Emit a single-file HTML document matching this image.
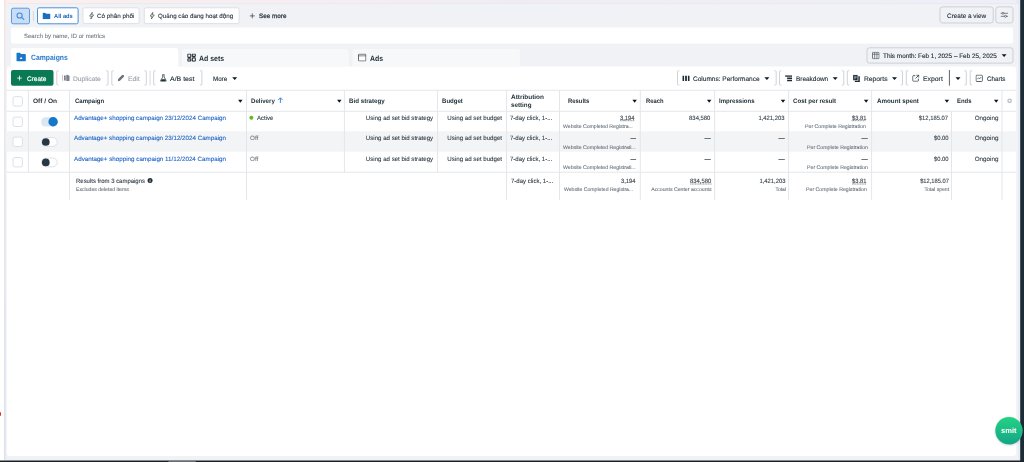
<!DOCTYPE html>
<html><head><meta charset="utf-8"><title>Campaigns</title>
<style>
html,body{margin:0;padding:0}
body{width:1024px;height:462px;overflow:hidden;position:relative;background:#fff;font-family:"Liberation Sans", "DejaVu Sans", sans-serif;}
#root{position:absolute;left:0;top:0;width:1024px;height:462px;overflow:hidden;will-change:transform}
#bg{position:absolute;left:0;top:0}
span.t{position:absolute;white-space:nowrap;line-height:10px;transform-origin:0 50%}
span.r{transform-origin:100% 50%}
</style></head><body><div id="root">
<svg id="bg" width="1024" height="462" viewBox="0 0 1024 462">
<defs><linearGradient id="gt" x1="0" x2="1" y1="0" y2="0"><stop offset="0" stop-color="#fcefee"/><stop offset="0.5" stop-color="#f1ecf4"/><stop offset="1" stop-color="#edeff8"/></linearGradient><linearGradient id="gl" x1="0" x2="0" y1="0" y2="1"><stop offset="0" stop-color="#f8e6e4"/><stop offset="0.4" stop-color="#e6e6ec"/><stop offset="1" stop-color="#d9e1ec"/></linearGradient><linearGradient id="gb" x1="0" x2="0" y1="0" y2="1"><stop offset="0" stop-color="#21d383"/><stop offset="1" stop-color="#16a487"/></linearGradient></defs>
<rect x="0.00" y="0.00" width="1024.00" height="462.00" fill="#fff"/>
<rect x="4.00" y="0.00" width="1016.00" height="6.00" fill="url(#gt)"/>
<rect x="4.00" y="0.00" width="2.00" height="460.00" fill="url(#gl)"/>
<rect x="1016.00" y="0.00" width="4.20" height="462.00" fill="#e5ebf4"/>
<path d="M5.5 461V6Q5.5 3.5 8 3.5H1016Q1018.4 3.5 1018.4 6V461Z" fill="#f0f2f6"/>
<rect x="8.00" y="3.35" width="1008.00" height="0.7" fill="#e6e7ec"/>
<rect x="1020.20" y="0.00" width="3.80" height="462.00" fill="#1d2b36"/>
<rect x="0.00" y="460.50" width="1024.00" height="1.50" fill="#1c2126"/>
<rect x="168.40" y="460.50" width="27.30" height="1.20" fill="#8b9096"/>
<ellipse cx="-0.5" cy="414" rx="1.6" ry="2.4" fill="#e1301d"/>
<rect x="11.50" y="8.20" width="18.00" height="15.60" rx="1.6" fill="#c9def6" stroke="#5a9be0" stroke-width="1"/>
<circle cx="19.6" cy="15.5" r="2.6" fill="none" stroke="#3f8bd8" stroke-width="1.05"/><path d="M21.6 17.4L23.8 19.4" stroke="#3f8bd8" stroke-width="1.2" stroke-linecap="round"/>
<rect x="32.90" y="11.00" width="1" height="10.00" fill="#d3d7dc"/>
<rect x="37.50" y="7.80" width="40.60" height="16.00" rx="1.6" fill="#fff" stroke="#4a90da" stroke-width="1"/>
<svg x="42.5" y="12.6" width="8" height="6.6" viewBox="0 0 16 13"><path d="M0 1.5Q0 0 1.5 0H5.5L7 2H14.5Q16 2 16 3.5V11.5Q16 13 14.5 13H1.5Q0 13 0 11.5Z" fill="#1b6ec2"/></svg>
<rect x="83.00" y="7.80" width="56.10" height="15.80" rx="1.8" fill="#fff" stroke="#dde0e5" stroke-width="1"/>
<svg x="88.8" y="11.9" width="5.6" height="7.5" viewBox="1.2 0.2 10 15.6"><path d="M7.5 1L2 9H6L4.5 15L10.5 6.5H6.5Z" fill="none" stroke="#3a454f" stroke-width="1.4" stroke-linejoin="round"/></svg>
<rect x="144.30" y="7.80" width="94.80" height="15.80" rx="1.8" fill="#fff" stroke="#dde0e5" stroke-width="1"/>
<svg x="149.4" y="11.9" width="5.6" height="7.5" viewBox="1.2 0.2 10 15.6"><path d="M7.5 1L2 9H6L4.5 15L10.5 6.5H6.5Z" fill="none" stroke="#3a454f" stroke-width="1.4" stroke-linejoin="round"/></svg>
<path d="M249.8 15.9h5M252.3 13.4v5" stroke="#3a454f" stroke-width="0.75"/>
<rect x="940.00" y="6.90" width="53.20" height="16.10" rx="2.5" fill="#f0f2f6" stroke="#cbd0d6" stroke-width="1"/>
<rect x="995.80" y="6.90" width="17.20" height="16.10" rx="2.5" fill="#f0f2f6" stroke="#cbd0d6" stroke-width="1"/>
<svg x="1000.5" y="11.3" width="7.5" height="7" viewBox="0 0 15 14"><path d="M0 4H15M0 10H15" stroke="#3a454f" stroke-width="1.3"/><circle cx="5" cy="4" r="2" fill="#f0f2f6" stroke="#3a454f" stroke-width="1.2"/><circle cx="10" cy="10" r="2" fill="#f0f2f6" stroke="#3a454f" stroke-width="1.2"/></svg>
<rect x="11.00" y="27.60" width="1002.00" height="16.00" rx="2" fill="#fff"/>
<path d="M6.8 453V69.5Q6.8 66.5 9.8 66.5H1013.2Q1016.2 66.5 1016.2 69.5V453Q1016.2 456 1013.2 456H9.8Q6.8 456 6.8 453Z" fill="#fff"/>
<path d="M11 70V51Q11 48 14 48H175.3Q178.3 48 178.3 51V70Z" fill="#fff"/>
<svg x="16.25" y="52.6" width="9.7" height="9" viewBox="0 0 19 18"><path d="M0 2Q0 0 2 0H6.5Q7.5 0 8 1L9 3H17Q19 3 19 5V16Q19 18 17 18H2Q0 18 0 16Z" fill="#1877c9"/><path d="M9.5 8.2L12.2 13H6.8Z" fill="#fff"/></svg>
<path d="M182 66.7V52Q182 49 185 49H345.8Q348.8 49 348.8 52V66.7Z" fill="#f7f8fa"/>
<svg x="187.2" y="53.5" width="8.7" height="8.2" viewBox="0 0 17 16"><g fill="#fff" stroke="#26313a" stroke-width="2.2"><rect x="1" y="1" width="6" height="6.5" rx="1.2"/><rect x="10" y="1" width="6" height="4.5" rx="1.2"/><rect x="1" y="10.5" width="6" height="4.5" rx="1.2"/><rect x="10" y="8.5" width="6" height="6.5" rx="1.2"/></g></svg>
<path d="M352.6 66.7V52Q352.6 49 355.6 49H517Q520 49 520 52V66.7Z" fill="#f7f8fa"/>
<svg x="358" y="53.6" width="8.4" height="8" viewBox="0 0 17 16"><rect x="1" y="1" width="15" height="14" rx="1.5" fill="#fff" stroke="#2b3640" stroke-width="1.5"/><path d="M1 4.5H16" stroke="#2b3640" stroke-width="1.2"/></svg>
<rect x="867.00" y="47.80" width="146.00" height="15.30" rx="2.5" fill="#f0f2f6" stroke="#cbd0d6" stroke-width="1"/>
<svg x="872" y="51.8" width="7.6" height="7.4" viewBox="0 0 15 15"><rect x="0.8" y="0.8" width="13.4" height="13.4" rx="1.5" fill="none" stroke="#3a454f" stroke-width="1.4"/><path d="M5.2 1V14M9.8 1V14M1 5H14" stroke="#3a454f" stroke-width="1.2"/></svg>
<path d="M1001.65 54.30h4.9l-2.45 2.8z" fill="#10171d"/>
<rect x="11.00" y="70.00" width="42.50" height="15.70" rx="2" fill="#0a7a55"/>
<path d="M17.1 78.1h4.8M19.5 75.7v4.8" stroke="#fff" stroke-width="0.8"/>
<rect x="56.30" y="70.30" width="52.20" height="15.20" rx="1.5" fill="#fff"/>
<path d="M58.70 70.80H57.40Q56.80 70.80 56.80 71.40V84.40Q56.80 85.00 57.40 85.00h1.3" fill="none" stroke="#c9cdd4" stroke-width="0.9"/>
<path d="M106.10 70.80H107.40Q108.00 70.80 108.00 71.40V84.40Q108.00 85.00 107.40 85.00h-1.3" fill="none" stroke="#c9cdd4" stroke-width="0.9"/>
<svg x="62" y="74.4" width="8" height="7" viewBox="0 0 16 14"><path d="M2.2 1Q0.8 1 0.8 2.5V11Q0.8 12.5 2.2 12.5" fill="none" stroke="#8a9199" stroke-width="1.1"/><path d="M4 2H7.5V12H4Z" fill="#7b828a"/><path d="M8.5 0.5H12L15 3.5V13H8.5Z" fill="#7b828a"/></svg>
<rect x="111.30" y="70.30" width="35.50" height="15.20" rx="1.5" fill="#fff"/>
<path d="M113.70 70.80H112.40Q111.80 70.80 111.80 71.40V84.40Q111.80 85.00 112.40 85.00h1.3" fill="none" stroke="#c9cdd4" stroke-width="0.9"/>
<path d="M144.40 70.80H145.70Q146.30 70.80 146.30 71.40V84.40Q146.30 85.00 145.70 85.00h-1.3" fill="none" stroke="#c9cdd4" stroke-width="0.9"/>
<svg x="117.5" y="74.5" width="7" height="7" viewBox="0 0 14 14"><path d="M0.6 13.4L1.4 9.2L9.4 1.2Q10.6 0 11.8 1.2L12.8 2.2Q14 3.4 12.8 4.6L4.8 12.6Z" fill="#6a7179"/></svg>
<rect x="149.60" y="70.50" width="1" height="15.00" fill="#d9dce1"/>
<rect x="153.20" y="70.30" width="49.20" height="15.20" rx="1.5" fill="#fff"/>
<path d="M155.60 70.80H154.30Q153.70 70.80 153.70 71.40V84.40Q153.70 85.00 154.30 85.00h1.3" fill="none" stroke="#c9cdd4" stroke-width="0.9"/>
<path d="M200.00 70.80H201.30Q201.90 70.80 201.90 71.40V84.40Q201.90 85.00 201.30 85.00h-1.3" fill="none" stroke="#c9cdd4" stroke-width="0.9"/>
<svg x="160" y="74.2" width="6.8" height="7.6" viewBox="0 0 14 16"><path d="M4.5 0.8H9.5M5.5 1V6L1 13.5Q0.5 15.2 2.2 15.2H11.8Q13.5 15.2 13 13.5L8.5 6V1" fill="none" stroke="#1c2b33" stroke-width="1.5"/><path d="M3.6 10.5H10.4L12.3 14.2H1.7Z" fill="#1c2b33"/></svg>
<path d="M232.20 77.20h5l-2.5 2.8z" fill="#10171d"/>
<rect x="677.00" y="70.30" width="99.70" height="15.20" rx="1.5" fill="#fff"/>
<path d="M679.40 70.80H678.10Q677.50 70.80 677.50 71.40V84.40Q677.50 85.00 678.10 85.00h1.3" fill="none" stroke="#c9cdd4" stroke-width="0.9"/>
<path d="M774.30 70.80H775.60Q776.20 70.80 776.20 71.40V84.40Q776.20 85.00 775.60 85.00h-1.3" fill="none" stroke="#c9cdd4" stroke-width="0.9"/>
<svg x="682.3" y="75.6" width="7.4" height="5.4" viewBox="0 0 15 11"><path d="M0 0H3.6V11H0ZM5.7 0H9.3V11H5.7ZM11.4 0H15V11H11.4Z" fill="#1c2b33"/></svg>
<path d="M764.40 77.20h5l-2.5 2.8z" fill="#10171d"/>
<rect x="779.00" y="70.30" width="65.30" height="15.20" rx="1.5" fill="#fff"/>
<path d="M781.40 70.80H780.10Q779.50 70.80 779.50 71.40V84.40Q779.50 85.00 780.10 85.00h1.3" fill="none" stroke="#c9cdd4" stroke-width="0.9"/>
<path d="M841.90 70.80H843.20Q843.80 70.80 843.80 71.40V84.40Q843.80 85.00 843.20 85.00h-1.3" fill="none" stroke="#c9cdd4" stroke-width="0.9"/>
<svg x="785" y="75.2" width="7.2" height="6.4" viewBox="0 0 14 13"><path d="M0 0H14V3.2H0ZM4 4.9H14V8.1H4ZM4 9.8H14V13H4Z" fill="#1c2b33"/></svg>
<path d="M832.70 77.20h5l-2.5 2.8z" fill="#10171d"/>
<rect x="846.80" y="70.30" width="56.20" height="15.20" rx="1.5" fill="#fff"/>
<path d="M849.20 70.80H847.90Q847.30 70.80 847.30 71.40V84.40Q847.30 85.00 847.90 85.00h1.3" fill="none" stroke="#c9cdd4" stroke-width="0.9"/>
<path d="M900.60 70.80H901.90Q902.50 70.80 902.50 71.40V84.40Q902.50 85.00 901.90 85.00h-1.3" fill="none" stroke="#c9cdd4" stroke-width="0.9"/>
<svg x="853" y="74.8" width="7.2" height="7.4" viewBox="0 0 14 15"><path d="M0 0H9V11H0Z" fill="#1c2b33"/><path d="M10.5 3H13.5V14.5H3.5V12.3H10.5Z" fill="#1c2b33"/><path d="M2 3H7M2 5.5H7M2 8H5" stroke="#fff" stroke-width="1"/></svg>
<path d="M892.00 77.20h5l-2.5 2.8z" fill="#10171d"/>
<rect x="905.80" y="70.30" width="61.00" height="15.20" rx="1.5" fill="#fff"/>
<path d="M908.20 70.80H906.90Q906.30 70.80 906.30 71.40V84.40Q906.30 85.00 906.90 85.00h1.3" fill="none" stroke="#c9cdd4" stroke-width="0.9"/>
<path d="M964.40 70.80H965.70Q966.30 70.80 966.30 71.40V84.40Q966.30 85.00 965.70 85.00h-1.3" fill="none" stroke="#c9cdd4" stroke-width="0.9"/>
<svg x="912.2" y="74.6" width="7.2" height="7.2" viewBox="0 0 14 14"><path d="M6 2H2.5Q1 2 1 3.5V11.5Q1 13 2.5 13H10.5Q12 13 12 11.5V8" fill="none" stroke="#1c2b33" stroke-width="1.5"/><path d="M8 1H13V6M13 1L6.5 7.5" fill="none" stroke="#1c2b33" stroke-width="1.5"/></svg>
<rect x="948.90" y="70.00" width="1.0" height="15.70" fill="#5a6773"/>
<path d="M955.50 77.20h5l-2.5 2.8z" fill="#10171d"/>
<rect x="969.70" y="70.30" width="46.50" height="15.20" rx="1.5" fill="#fff"/>
<path d="M972.10 70.80H970.80Q970.20 70.80 970.20 71.40V84.40Q970.20 85.00 970.80 85.00h1.3" fill="none" stroke="#c9cdd4" stroke-width="0.9"/>
<svg x="975.5" y="74.6" width="7.4" height="7.4" viewBox="0 0 15 15"><rect x="1" y="1" width="13" height="13" rx="2" fill="none" stroke="#1c2b33" stroke-width="1.5"/><path d="M3.5 9.5L6.5 6.5L8.5 8.5L11.5 5" fill="none" stroke="#1c2b33" stroke-width="1.3"/></svg>
<rect x="6.80" y="131.30" width="1009.40" height="20.40" fill="#f3f4f6"/>
<rect x="6.80" y="89.80" width="1009.40" height="1" fill="#e4e6ea"/>
<rect x="6.80" y="110.80" width="1009.40" height="1" fill="#e4e6ea"/>
<rect x="6.80" y="171.70" width="1009.40" height="1" fill="#e4e6ea"/>
<rect x="27.90" y="90.30" width="1" height="21.00" fill="#e4e6ea"/>
<rect x="69.00" y="90.30" width="1" height="21.00" fill="#e4e6ea"/>
<rect x="246.00" y="90.30" width="1" height="21.00" fill="#e4e6ea"/>
<rect x="343.90" y="90.30" width="1" height="21.00" fill="#e4e6ea"/>
<rect x="437.00" y="90.30" width="1" height="21.00" fill="#e4e6ea"/>
<rect x="506.00" y="90.30" width="1" height="21.00" fill="#e4e6ea"/>
<rect x="559.00" y="90.30" width="1" height="21.00" fill="#e4e6ea"/>
<rect x="639.80" y="90.30" width="1" height="21.00" fill="#e4e6ea"/>
<rect x="714.10" y="90.30" width="1" height="21.00" fill="#e4e6ea"/>
<rect x="788.10" y="90.30" width="1" height="21.00" fill="#e4e6ea"/>
<rect x="871.10" y="90.30" width="1" height="21.00" fill="#e4e6ea"/>
<rect x="1001.50" y="90.30" width="1" height="21.00" fill="#e4e6ea"/>
<rect x="27.90" y="111.30" width="1" height="60.90" fill="#e4e6ea"/>
<rect x="69.00" y="111.30" width="1" height="60.90" fill="#e4e6ea"/>
<rect x="246.00" y="111.30" width="1" height="60.90" fill="#e4e6ea"/>
<rect x="343.90" y="111.30" width="1" height="60.90" fill="#e4e6ea"/>
<rect x="437.00" y="111.30" width="1" height="60.90" fill="#e4e6ea"/>
<rect x="506.00" y="111.30" width="1" height="60.90" fill="#e4e6ea"/>
<rect x="559.00" y="111.30" width="1" height="60.90" fill="#e4e6ea"/>
<rect x="639.80" y="111.30" width="1" height="60.90" fill="#e4e6ea"/>
<rect x="714.10" y="111.30" width="1" height="60.90" fill="#e4e6ea"/>
<rect x="788.10" y="111.30" width="1" height="60.90" fill="#e4e6ea"/>
<rect x="871.10" y="111.30" width="1" height="60.90" fill="#e4e6ea"/>
<rect x="951.00" y="111.30" width="1" height="60.90" fill="#e4e6ea"/>
<rect x="1001.50" y="111.30" width="1" height="60.90" fill="#e4e6ea"/>
<rect x="69.00" y="172.20" width="1" height="27.60" fill="#e4e6ea"/>
<rect x="246.00" y="172.20" width="1" height="27.60" fill="#e4e6ea"/>
<rect x="506.00" y="172.20" width="1" height="27.60" fill="#e4e6ea"/>
<rect x="559.00" y="172.20" width="1" height="27.60" fill="#e4e6ea"/>
<rect x="639.80" y="172.20" width="1" height="27.60" fill="#e4e6ea"/>
<rect x="714.10" y="172.20" width="1" height="27.60" fill="#e4e6ea"/>
<rect x="788.10" y="172.20" width="1" height="27.60" fill="#e4e6ea"/>
<rect x="871.10" y="172.20" width="1" height="27.60" fill="#e4e6ea"/>
<rect x="951.00" y="172.20" width="1" height="27.60" fill="#e4e6ea"/>
<rect x="1001.50" y="172.20" width="1" height="27.60" fill="#e4e6ea"/>
<rect x="13.00" y="96.70" width="9.40" height="9.40" rx="1.8" fill="#fff" stroke="#dce0e5" stroke-width="1"/>
<path d="M238.05 99.85h4.5l-2.25 2.8z" fill="#10171d"/>
<path d="M280.4 102.9V97.9M278.1 100.1L280.4 97.8L282.7 100.1" fill="none" stroke="#2a7be0" stroke-width="0.9"/>
<path d="M337.05 99.85h4.5l-2.25 2.8z" fill="#10171d"/>
<path d="M632.35 99.85h4.5l-2.25 2.8z" fill="#10171d"/>
<path d="M706.95 99.85h4.5l-2.25 2.8z" fill="#10171d"/>
<path d="M780.75 99.85h4.5l-2.25 2.8z" fill="#10171d"/>
<path d="M863.85 99.85h4.5l-2.25 2.8z" fill="#10171d"/>
<path d="M944.65 99.85h4.5l-2.25 2.8z" fill="#10171d"/>
<path d="M993.95 99.85h4.5l-2.25 2.8z" fill="#10171d"/>
<circle cx="1009.6" cy="100.8" r="1.7" fill="none" stroke="#b9bec5" stroke-width="1.3"/>
<rect x="13.00" y="117.10" width="9.40" height="9.40" rx="1.8" fill="#fff" stroke="#dce0e5" stroke-width="1"/>
<rect x="41.00" y="117.30" width="16.80" height="9.20" rx="4.6" fill="#d9e6f4"/>
<circle cx="53.1" cy="121.70" r="4.7" fill="#1676c9"/>
<circle cx="251.35" cy="117.70" r="2.0" fill="#5fba24"/>
<path d="M620.00 120.70H634.60" stroke="#59636c" stroke-width="0.7" stroke-dasharray="1.1 0.5"/>
<path d="M851.60 120.70H866.00" stroke="#59636c" stroke-width="0.7" stroke-dasharray="1.1 0.5"/>
<rect x="13.00" y="137.10" width="9.40" height="9.40" rx="1.8" fill="#fff" stroke="#dce0e5" stroke-width="1"/>
<rect x="41.50" y="137.60" width="15.80" height="8.80" rx="4.9" fill="#fff" stroke="#dde1e6" stroke-width="1"/>
<circle cx="45.8" cy="142.00" r="3.85" fill="#293742"/>
<rect x="630.40" y="138.15" width="5.70" height="0.8" fill="#4a545d"/>
<rect x="704.40" y="138.15" width="6.40" height="0.8" fill="#4a545d"/>
<rect x="778.40" y="138.15" width="6.40" height="0.8" fill="#4a545d"/>
<rect x="861.40" y="138.15" width="6.40" height="0.8" fill="#4a545d"/>
<rect x="13.00" y="157.50" width="9.40" height="9.40" rx="1.8" fill="#fff" stroke="#dce0e5" stroke-width="1"/>
<rect x="41.50" y="158.00" width="15.80" height="8.80" rx="4.9" fill="#fff" stroke="#dde1e6" stroke-width="1"/>
<circle cx="45.8" cy="162.40" r="3.85" fill="#293742"/>
<rect x="630.40" y="159.05" width="5.70" height="0.8" fill="#4a545d"/>
<rect x="704.40" y="159.05" width="6.40" height="0.8" fill="#4a545d"/>
<rect x="778.40" y="159.05" width="6.40" height="0.8" fill="#4a545d"/>
<rect x="861.40" y="159.05" width="6.40" height="0.8" fill="#4a545d"/>
<circle cx="150.05" cy="180.6" r="2.5" fill="#222f39"/><path d="M150.05 180.2V182" stroke="#fff" stroke-width="0.7"/><circle cx="150.05" cy="179.3" r="0.4" fill="#fff"/>
<path d="M690.20 184.00H711.60" stroke="#59636c" stroke-width="0.7" stroke-dasharray="1.1 0.5"/>
<path d="M852.10 184.00H866.50" stroke="#59636c" stroke-width="0.7" stroke-dasharray="1.1 0.5"/>
<circle cx="1009" cy="431.6" r="15" fill="#000" opacity="0.06"/>
<circle cx="1009" cy="430.8" r="13.7" fill="url(#gb)"/>
</svg>
<span class="t" style="left:53.75px;top:11.12px;font-size:6.0px;font-weight:700;color:#1763b5;transform:matrix(0.9524,0.0005,0,1,0,0);">All ads</span>
<span class="t" style="left:97.00px;top:11.05px;font-size:6.2px;font-weight:400;color:#2a3640;transform:matrix(1.0119,0.0005,0,1,0,0);-webkit-text-stroke:0.1px #2a3640;">Có phân phối</span>
<span class="t" style="left:158.00px;top:11.05px;font-size:6.2px;font-weight:400;color:#2a3640;transform:matrix(1.0011,0.0005,0,1,0,0);-webkit-text-stroke:0.1px #2a3640;">Quảng cáo đang hoạt động</span>
<span class="t" style="left:259.00px;top:11.02px;font-size:6.3px;font-weight:400;color:#3a454f;transform:matrix(1.0069,0.0005,0,1,0,0);-webkit-text-stroke:0.3px #3a454f;">See more</span>
<span class="t" style="left:947.30px;top:10.72px;font-size:6.3px;font-weight:400;color:#1c2b33;transform:matrix(1.0182,0.0005,0,1,0,0);-webkit-text-stroke:0.1px #1c2b33;">Create a view</span>
<span class="t" style="left:23.80px;top:30.92px;font-size:6.0px;font-weight:400;color:#737c85;transform:matrix(0.9996,0.0005,0,1,0,0);-webkit-text-stroke:0.1px #737c85;">Search by name, ID or metrics</span>
<span class="t" style="left:30.60px;top:52.83px;font-size:7.7px;font-weight:700;color:#2a7bcb;transform:matrix(0.8881,0.0005,0,1,0,0);">Campaigns</span>
<span class="t" style="left:199.40px;top:53.73px;font-size:7.7px;font-weight:700;color:#1c2b33;transform:matrix(0.9035,0.0005,0,1,0,0);">Ad sets</span>
<span class="t" style="left:370.10px;top:53.73px;font-size:7.7px;font-weight:700;color:#1c2b33;transform:matrix(0.9015,0.0005,0,1,0,0);">Ads</span>
<span class="t" style="left:883.20px;top:51.05px;font-size:6.5px;font-weight:400;color:#1c2b33;transform:matrix(0.9810,0.0005,0,1,0,0);-webkit-text-stroke:0.12px #1c2b33;">This month: Feb 1, 2025 – Feb 25, 2025</span>
<span class="t" style="left:26.90px;top:73.51px;font-size:6.6px;font-weight:400;color:#fff;transform:matrix(0.9800,0.0005,0,1,0,0);-webkit-text-stroke:0.2px #fff;">Create</span>
<span class="t" style="left:73.00px;top:73.51px;font-size:6.6px;font-weight:400;color:#9aa1a9;transform:matrix(1.0109,0.0005,0,1,0,0);-webkit-text-stroke:0.1px #9aa1a9;">Duplicate</span>
<span class="t" style="left:127.70px;top:73.51px;font-size:6.6px;font-weight:400;color:#9aa1a9;transform:matrix(1.0286,0.0005,0,1,0,0);-webkit-text-stroke:0.1px #9aa1a9;">Edit</span>
<span class="t" style="left:170.20px;top:73.51px;font-size:6.6px;font-weight:400;color:#1c2b33;transform:matrix(1.0566,0.0005,0,1,0,0);-webkit-text-stroke:0.12px #1c2b33;">A/B test</span>
<span class="t" style="left:213.00px;top:73.51px;font-size:6.6px;font-weight:400;color:#1c2b33;transform:matrix(0.9514,0.0005,0,1,0,0);-webkit-text-stroke:0.12px #1c2b33;">More</span>
<span class="t" style="left:693.40px;top:73.51px;font-size:6.6px;font-weight:400;color:#1c2b33;transform:matrix(0.9876,0.0005,0,1,0,0);-webkit-text-stroke:0.12px #1c2b33;">Columns: Performance</span>
<span class="t" style="left:795.60px;top:73.51px;font-size:6.6px;font-weight:400;color:#1c2b33;transform:matrix(0.9758,0.0005,0,1,0,0);-webkit-text-stroke:0.12px #1c2b33;">Breakdown</span>
<span class="t" style="left:863.70px;top:73.51px;font-size:6.6px;font-weight:400;color:#1c2b33;transform:matrix(1.0219,0.0005,0,1,0,0);-webkit-text-stroke:0.12px #1c2b33;">Reports</span>
<span class="t" style="left:922.50px;top:73.51px;font-size:6.6px;font-weight:400;color:#1c2b33;transform:matrix(1.0387,0.0005,0,1,0,0);-webkit-text-stroke:0.12px #1c2b33;">Export</span>
<span class="t" style="left:986.70px;top:73.51px;font-size:6.6px;font-weight:400;color:#1c2b33;transform:matrix(0.9474,0.0005,0,1,0,0);-webkit-text-stroke:0.12px #1c2b33;">Charts</span>
<span class="t" style="left:33.10px;top:95.58px;font-size:6.4px;font-weight:700;color:#1c2b33;transform:matrix(1.0283,0.0005,0,1,0,0);">Off / On</span>
<span class="t" style="left:74.50px;top:95.58px;font-size:6.4px;font-weight:700;color:#1c2b33;transform:matrix(0.9448,0.0005,0,1,0,0);">Campaign</span>
<span class="t" style="left:250.80px;top:95.58px;font-size:6.4px;font-weight:700;color:#1c2b33;transform:matrix(0.9568,0.0005,0,1,0,0);">Delivery</span>
<span class="t" style="left:349.20px;top:95.98px;font-size:6.4px;font-weight:700;color:#1c2b33;transform:matrix(0.9692,0.0005,0,1,0,0);">Bid strategy</span>
<span class="t" style="left:442.00px;top:95.98px;font-size:6.4px;font-weight:700;color:#1c2b33;transform:matrix(0.9493,0.0005,0,1,0,0);">Budget</span>
<span class="t" style="left:510.90px;top:92.18px;font-size:6.4px;font-weight:700;color:#1c2b33;transform:matrix(1.0105,0.0005,0,1,0,0);">Attribution</span>
<span class="t" style="left:510.90px;top:100.28px;font-size:6.4px;font-weight:700;color:#1c2b33;transform:matrix(0.9784,0.0005,0,1,0,0);">setting</span>
<span class="t" style="left:567.90px;top:95.58px;font-size:6.4px;font-weight:700;color:#1c2b33;transform:matrix(0.9223,0.0005,0,1,0,0);">Results</span>
<span class="t" style="left:645.60px;top:95.58px;font-size:6.4px;font-weight:700;color:#1c2b33;transform:matrix(0.9121,0.0005,0,1,0,0);">Reach</span>
<span class="t" style="left:719.10px;top:95.58px;font-size:6.4px;font-weight:700;color:#1c2b33;transform:matrix(0.9454,0.0005,0,1,0,0);">Impressions</span>
<span class="t" style="left:793.20px;top:95.58px;font-size:6.4px;font-weight:700;color:#1c2b33;transform:matrix(0.9555,0.0005,0,1,0,0);">Cost per result</span>
<span class="t" style="left:876.70px;top:95.58px;font-size:6.4px;font-weight:700;color:#1c2b33;transform:matrix(0.9751,0.0005,0,1,0,0);">Amount spent</span>
<span class="t" style="left:956.80px;top:95.58px;font-size:6.4px;font-weight:700;color:#1c2b33;transform:matrix(0.9280,0.0005,0,1,0,0);">Ends</span>
<span class="t" style="left:74.00px;top:112.55px;font-size:6.2px;font-weight:400;color:#1f64c8;transform:matrix(1.0053,0.0005,0,1,0,0);-webkit-text-stroke:0.1px #1f64c8;">Advantage+ shopping campaign 23/12/2024 Campaign</span>
<span class="t" style="left:257.00px;top:112.55px;font-size:6.2px;font-weight:400;color:#36424c;transform:matrix(0.9728,0.0005,0,1,0,0);-webkit-text-stroke:0.1px #36424c;">Active</span>
<span class="t r" style="right:590.70px;top:112.55px;font-size:6.2px;font-weight:400;color:#36424c;transform:matrix(0.9881,0.0005,0,1,0,0);-webkit-text-stroke:0.1px #36424c;">Using ad set bid strategy</span>
<span class="t r" style="right:521.70px;top:112.55px;font-size:6.2px;font-weight:400;color:#36424c;transform:matrix(0.9937,0.0005,0,1,0,0);-webkit-text-stroke:0.1px #36424c;">Using ad set budget</span>
<span class="t" style="left:510.30px;top:112.55px;font-size:6.2px;font-weight:400;color:#36424c;transform:matrix(0.9740,0.0005,0,1,0,0);-webkit-text-stroke:0.1px #36424c;">7-day click, 1-...</span>
<span class="t r" style="right:389.40px;top:112.55px;font-size:6.2px;font-weight:400;color:#36424c;transform:matrix(0.9429,0.0005,0,1,0,0);-webkit-text-stroke:0.1px #36424c;">3,194</span>
<span class="t" style="left:563.30px;top:121.00px;font-size:5.2px;font-weight:400;color:#6b747d;transform:matrix(0.9934,0.0005,0,1,0,0);-webkit-text-stroke:0.1px #6b747d;">Website Completed Registra...</span>
<span class="t r" style="right:313.20px;top:112.55px;font-size:6.2px;font-weight:400;color:#36424c;transform:matrix(0.9520,0.0005,0,1,0,0);-webkit-text-stroke:0.1px #36424c;">834,580</span>
<span class="t r" style="right:239.10px;top:112.55px;font-size:6.2px;font-weight:400;color:#36424c;transform:matrix(0.9480,0.0005,0,1,0,0);-webkit-text-stroke:0.1px #36424c;">1,421,203</span>
<span class="t r" style="right:158.00px;top:112.55px;font-size:6.2px;font-weight:400;color:#36424c;transform:matrix(0.9300,0.0005,0,1,0,0);-webkit-text-stroke:0.1px #36424c;">$3.81</span>
<span class="t r" style="right:158.00px;top:121.00px;font-size:5.2px;font-weight:400;color:#6b747d;transform:matrix(0.9993,0.0005,0,1,0,0);-webkit-text-stroke:0.1px #6b747d;">Per Complete Registration</span>
<span class="t r" style="right:75.80px;top:112.55px;font-size:6.2px;font-weight:400;color:#36424c;transform:matrix(0.9397,0.0005,0,1,0,0);-webkit-text-stroke:0.1px #36424c;">$12,185.07</span>
<span class="t r" style="right:26.00px;top:112.55px;font-size:6.2px;font-weight:400;color:#36424c;transform:matrix(1.0126,0.0005,0,1,0,0);-webkit-text-stroke:0.1px #36424c;">Ongoing</span>
<span class="t" style="left:74.00px;top:132.95px;font-size:6.2px;font-weight:400;color:#1f64c8;transform:matrix(1.0053,0.0005,0,1,0,0);-webkit-text-stroke:0.1px #1f64c8;">Advantage+ shopping campaign 23/12/2024 Campaign</span>
<span class="t" style="left:250.00px;top:132.95px;font-size:6.2px;font-weight:400;color:#737c85;transform:matrix(1.0196,0.0005,0,1,0,0);-webkit-text-stroke:0.1px #737c85;">Off</span>
<span class="t r" style="right:590.70px;top:132.95px;font-size:6.2px;font-weight:400;color:#36424c;transform:matrix(0.9881,0.0005,0,1,0,0);-webkit-text-stroke:0.1px #36424c;">Using ad set bid strategy</span>
<span class="t r" style="right:521.70px;top:132.95px;font-size:6.2px;font-weight:400;color:#36424c;transform:matrix(0.9937,0.0005,0,1,0,0);-webkit-text-stroke:0.1px #36424c;">Using ad set budget</span>
<span class="t" style="left:510.30px;top:132.95px;font-size:6.2px;font-weight:400;color:#36424c;transform:matrix(0.9740,0.0005,0,1,0,0);-webkit-text-stroke:0.1px #36424c;">7-day click, 1-...</span>
<span class="t" style="left:563.30px;top:141.55px;font-size:5.2px;font-weight:400;color:#6b747d;transform:matrix(0.9978,0.0005,0,1,0,0);-webkit-text-stroke:0.1px #6b747d;">Website Completed Registrati...</span>
<span class="t r" style="right:156.30px;top:141.55px;font-size:5.2px;font-weight:400;color:#6b747d;transform:matrix(0.9993,0.0005,0,1,0,0);-webkit-text-stroke:0.1px #6b747d;">Per Complete Registration</span>
<span class="t r" style="right:75.80px;top:132.95px;font-size:6.2px;font-weight:400;color:#36424c;transform:matrix(0.9364,0.0005,0,1,0,0);-webkit-text-stroke:0.1px #36424c;">$0.00</span>
<span class="t r" style="right:26.00px;top:132.95px;font-size:6.2px;font-weight:400;color:#36424c;transform:matrix(1.0126,0.0005,0,1,0,0);-webkit-text-stroke:0.1px #36424c;">Ongoing</span>
<span class="t" style="left:74.00px;top:153.65px;font-size:6.2px;font-weight:400;color:#1f64c8;transform:matrix(1.0084,0.0005,0,1,0,0);-webkit-text-stroke:0.1px #1f64c8;">Advantage+ shopping campaign 11/12/2024 Campaign</span>
<span class="t" style="left:250.00px;top:153.65px;font-size:6.2px;font-weight:400;color:#737c85;transform:matrix(1.0196,0.0005,0,1,0,0);-webkit-text-stroke:0.1px #737c85;">Off</span>
<span class="t r" style="right:590.70px;top:153.65px;font-size:6.2px;font-weight:400;color:#36424c;transform:matrix(0.9881,0.0005,0,1,0,0);-webkit-text-stroke:0.1px #36424c;">Using ad set bid strategy</span>
<span class="t r" style="right:521.70px;top:153.65px;font-size:6.2px;font-weight:400;color:#36424c;transform:matrix(0.9937,0.0005,0,1,0,0);-webkit-text-stroke:0.1px #36424c;">Using ad set budget</span>
<span class="t" style="left:510.30px;top:153.65px;font-size:6.2px;font-weight:400;color:#36424c;transform:matrix(0.9740,0.0005,0,1,0,0);-webkit-text-stroke:0.1px #36424c;">7-day click, 1-...</span>
<span class="t" style="left:563.30px;top:162.10px;font-size:5.2px;font-weight:400;color:#6b747d;transform:matrix(0.9978,0.0005,0,1,0,0);-webkit-text-stroke:0.1px #6b747d;">Website Completed Registrati...</span>
<span class="t r" style="right:156.30px;top:162.10px;font-size:5.2px;font-weight:400;color:#6b747d;transform:matrix(0.9993,0.0005,0,1,0,0);-webkit-text-stroke:0.1px #6b747d;">Per Complete Registration</span>
<span class="t r" style="right:75.80px;top:153.65px;font-size:6.2px;font-weight:400;color:#36424c;transform:matrix(0.9364,0.0005,0,1,0,0);-webkit-text-stroke:0.1px #36424c;">$0.00</span>
<span class="t r" style="right:26.00px;top:153.65px;font-size:6.2px;font-weight:400;color:#36424c;transform:matrix(1.0126,0.0005,0,1,0,0);-webkit-text-stroke:0.1px #36424c;">Ongoing</span>
<span class="t" style="left:76.00px;top:175.85px;font-size:6.2px;font-weight:400;color:#36424c;transform:matrix(0.9646,0.0005,0,1,0,0);-webkit-text-stroke:0.1px #36424c;">Results from 3 campaigns</span>
<span class="t" style="left:76.00px;top:184.10px;font-size:5.2px;font-weight:400;color:#6b747d;transform:matrix(0.9895,0.0005,0,1,0,0);-webkit-text-stroke:0.1px #6b747d;">Excludes deleted items</span>
<span class="t" style="left:511.00px;top:175.85px;font-size:6.2px;font-weight:400;color:#36424c;transform:matrix(0.9740,0.0005,0,1,0,0);-webkit-text-stroke:0.1px #36424c;">7-day click, 1-...</span>
<span class="t r" style="right:388.70px;top:175.85px;font-size:6.2px;font-weight:400;color:#36424c;transform:matrix(0.9429,0.0005,0,1,0,0);-webkit-text-stroke:0.1px #36424c;">3,194</span>
<span class="t" style="left:564.30px;top:184.10px;font-size:5.2px;font-weight:400;color:#6b747d;transform:matrix(0.9848,0.0005,0,1,0,0);-webkit-text-stroke:0.1px #6b747d;">Website Completed Registra...</span>
<span class="t r" style="right:312.40px;top:175.85px;font-size:6.2px;font-weight:400;color:#36424c;transform:matrix(0.9564,0.0005,0,1,0,0);-webkit-text-stroke:0.1px #36424c;">834,580</span>
<span class="t r" style="right:312.40px;top:184.10px;font-size:5.2px;font-weight:400;color:#6b747d;transform:matrix(0.9957,0.0005,0,1,0,0);-webkit-text-stroke:0.1px #6b747d;">Accounts Center accounts</span>
<span class="t r" style="right:238.40px;top:175.85px;font-size:6.2px;font-weight:400;color:#36424c;transform:matrix(0.9480,0.0005,0,1,0,0);-webkit-text-stroke:0.1px #36424c;">1,421,203</span>
<span class="t r" style="right:238.40px;top:184.10px;font-size:5.2px;font-weight:400;color:#6b747d;transform:matrix(0.9573,0.0005,0,1,0,0);-webkit-text-stroke:0.1px #6b747d;">Total</span>
<span class="t r" style="right:157.50px;top:175.85px;font-size:6.2px;font-weight:400;color:#36424c;transform:matrix(0.9300,0.0005,0,1,0,0);-webkit-text-stroke:0.1px #36424c;">$3.81</span>
<span class="t r" style="right:157.50px;top:184.10px;font-size:5.2px;font-weight:400;color:#6b747d;transform:matrix(0.9993,0.0005,0,1,0,0);-webkit-text-stroke:0.1px #6b747d;">Per Complete Registration</span>
<span class="t r" style="right:75.30px;top:175.85px;font-size:6.2px;font-weight:400;color:#36424c;transform:matrix(0.9300,0.0005,0,1,0,0);-webkit-text-stroke:0.1px #36424c;">$12,185.07</span>
<span class="t r" style="right:75.30px;top:184.10px;font-size:5.2px;font-weight:400;color:#6b747d;transform:matrix(0.9803,0.0005,0,1,0,0);-webkit-text-stroke:0.1px #6b747d;">Total spent</span>
<span class="t" style="left:1001.20px;top:426.24px;font-size:7.4px;font-weight:700;color:#fff;transform:matrix(1.0261,0.0005,0,1,0,0);">smit</span>
</div></body></html>
